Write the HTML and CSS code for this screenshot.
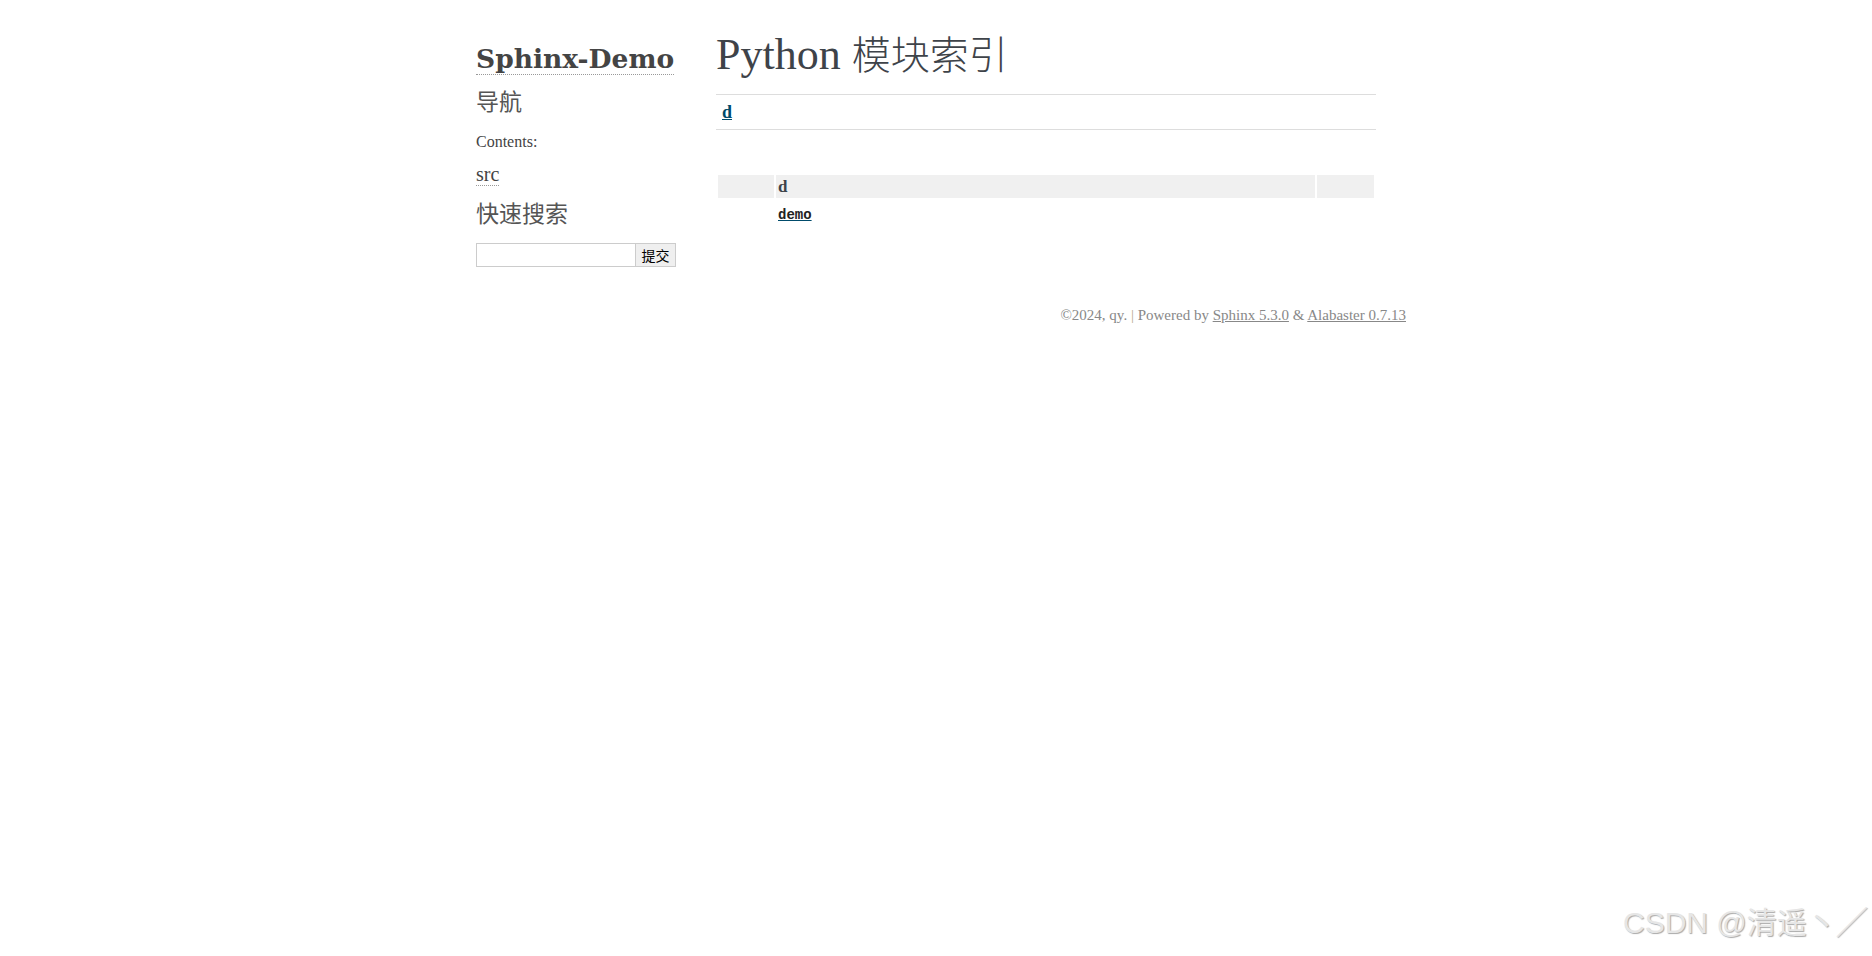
FILE: index.html
```html
<!DOCTYPE html>
<html lang="zh-CN">

<head>
	<meta charset="UTF-8" />
	<meta name="viewport" content="width=device-width, initial-scale=1.0" />
	<title>Python 模块索引 — Sphinx-Demo</title>
	<link rel="stylesheet" href="styles.css">
</head>

<body>
	<div class="document">
		<aside class="sidebar">
			<h1 class="logo"><a href="#">Sphinx-Demo</a></h1>

			<h3>导航</h3>
			<p class="caption">Contents:</p>
			<ul class="toc">
				<li><a href="#">src</a></li>
			</ul>

			<h3>快速搜索</h3>
			<form class="search" onsubmit="return false">
				<input type="text" name="q" aria-labelledby="searchlabel" />
				<input type="submit" value="提交" />
			</form>
		</aside>

		<main class="body">
			<h1>Python <span class="zh">模块索引</span></h1>

			<div class="jumpbox">
				<a href="#cap-d"><strong>d</strong></a>
			</div>

			<table class="modindex">
				<tr class="pcap">
					<td class="c1"></td>
					<td>&#160;</td>
					<td class="c3"></td>
				</tr>
				<tr class="cap" id="cap-d">
					<td></td>
					<td><strong>d</strong></td>
					<td></td>
				</tr>
				<tr class="entry">
					<td></td>
					<td><a href="#"><code>demo</code></a></td>
					<td><em></em></td>
				</tr>
			</table>
		</main>
	</div>

	<footer class="footer">
		&copy;2024, qy.
		<span class="sep">|</span>
		Powered by <a href="#">Sphinx 5.3.0</a>
		&amp; <a href="#">Alabaster 0.7.13</a>
	</footer>

	<div class="watermark">CSDN @清遥丶╱</div>
</body>

</html>
```

FILE: styles.css
```css
html,
body {
	margin: 0;
	background: #fff;
	overflow: hidden;
}

body {
	font-family: "Liberation Serif", "Noto Sans CJK SC", serif;
	font-size: 17px;
	color: #3e4349;
	min-height: 956px;
}

a {
	color: #004b6b;
}

.document {
	width: 940px;
	margin: 30px auto 0;
	display: flex;
}

/* sidebar */

.sidebar {
	width: 200px;
	padding: 14px 10px 0;
	flex: none;
}

.sidebar a {
	color: #444;
	text-decoration: none;
	border-bottom: 1px dotted #999;
}

.logo {
	margin: 0;
	font: bold 26.5px/30px "DejaVu Serif", serif;
	color: #444;
}

.sidebar h3 {
	margin: 12px 0 0;
	font: normal 23px/28px "Noto Sans CJK SC", sans-serif;
	color: #555;
}

.caption {
	margin: 18px 0 0;
	font-size: 16px;
	line-height: 20px;
	color: #444;
}

.toc {
	list-style: none;
	margin: 10px 0 0;
	padding: 0;
	font-size: 20px;
	line-height: 24px;
}

.toc + h3 {
	margin-top: 12px;
}

.search {
	display: flex;
	margin: 17px 0 0;
}

.search input {
	box-sizing: border-box;
	height: 24px;
	margin: 0;
	border: 1px solid #ccc;
	font: 14px "Noto Sans CJK SC", sans-serif;
}

.search input[type=text] {
	width: 160px;
	background: #fff;
}

.search input[type=submit] {
	width: 40px;
	border-left: none;
	background: #efefef;
	color: #000;
	padding: 0;
}

/* body */

.body {
	width: 660px;
	padding: 0 30px;
	flex: none;
}

.body h1 {
	margin: 0;
	font-weight: normal;
	font-size: 44px;
	line-height: 50px;
}

.body h1 .zh {
	font-family: "Noto Sans CJK SC", sans-serif;
	font-size: 39px;
	font-weight: 300;
	line-height: 0;
}

.jumpbox {
	margin: 14px 0 20px;
	border-top: 1px solid #ddd;
	border-bottom: 1px solid #ddd;
	padding: 6px;
	font-size: 18px;
	line-height: 22px;
}

.modindex {
	width: 100%;
	border-spacing: 2px;
	margin-left: 0;
}

.modindex td {
	padding: 2px;
	line-height: 17px;
	text-align: left;
	vertical-align: top;
}

.modindex .c1 {
	width: 52px;
}

.modindex .c3 {
	width: 53px;
}

.modindex .cap td {
	background: #f0f0f0;
	line-height: 19px;
}

.modindex .entry td {
	line-height: 24px;
}

.modindex code {
	font-family: "Liberation Mono", monospace;
	font-weight: bold;
	font-size: 14px;
	color: #222;
}

/* footer */

.footer {
	width: 940px;
	margin: 38px auto 30px;
	font-size: 15px;
	line-height: 20px;
	color: #888;
	text-align: right;
}

.footer a {
	color: #888;
}

.footer .sep {
	color: #b9a98e;
}

.watermark {
	position: absolute;
	left: 1623px;
	top: 903px;
	white-space: nowrap;
	font: 30px/40px "Liberation Sans", "Noto Sans CJK SC", sans-serif;
	color: #e6e6e6;
	text-shadow: 1px 1px 1px #a9a9a9;
}
```
